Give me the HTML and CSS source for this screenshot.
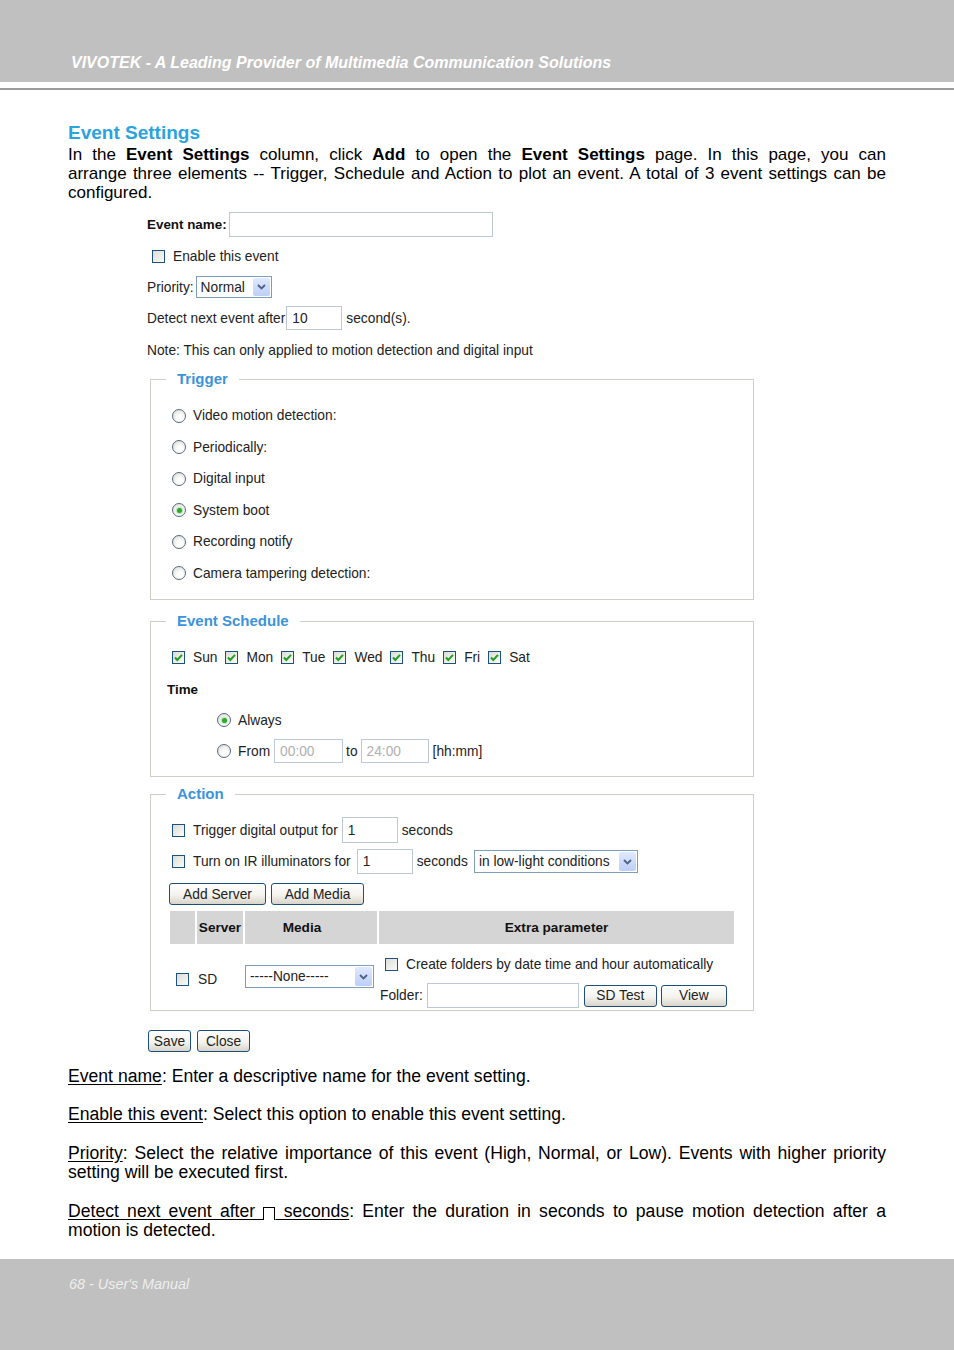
FILE: index.html
```html
<!DOCTYPE html>
<html>
<head>
<meta charset="utf-8">
<link rel="stylesheet" href="styles.css">
</head>
<body>
<div class="band"><span class="band-title">VIVOTEK - A Leading Provider of Multimedia Communication Solutions</span></div>
<div class="rule"></div>
<main class="content">
  <h1 class="title">Event Settings</h1>
  <p class="intro"><span class="jl">In the <b>Event Settings</b> column, click <b>Add</b> to open the <b>Event Settings</b> page. In this page, you can</span><span class="jl">arrange three elements -- Trigger, Schedule and Action to plot an event. A total of 3 event settings can be</span>configured.</p>

  <div class="ui">
    <div class="frow r-name"><span class="lbl-b">Event name:</span><span class="inp w-name"></span></div>
    <div class="frow r-enable"><span class="cb"></span><span class="gap8">Enable this event</span></div>
    <div class="frow r-prio"><span>Priority:</span>
      <span class="sel w-prio"><span class="sel-text">Normal</span><span class="sel-btn"><svg width="9" height="6" viewBox="0 0 9 6"><path d="M1 1 L4.5 4.5 L8 1" fill="none" stroke="#4d6185" stroke-width="1.8"/></svg></span></span>
    </div>
    <div class="frow r-detect"><span>Detect next event after</span><span class="inp w-sec">10</span><span class="gap4">second(s).</span></div>
    <div class="frow r-note">Note: This can only applied to motion detection and digital input</div>

    <fieldset class="fs fs-trigger">
      <legend class="lg">Trigger</legend>
      <div class="fs-in in-trigger">
        <div class="trow"><span class="rd"></span><span class="gap7">Video motion detection:</span></div>
        <div class="trow"><span class="rd"></span><span class="gap7">Periodically:</span></div>
        <div class="trow"><span class="rd"></span><span class="gap7">Digital input</span></div>
        <div class="trow"><span class="rd on"></span><span class="gap7">System boot</span></div>
        <div class="trow"><span class="rd"></span><span class="gap7">Recording notify</span></div>
        <div class="trow"><span class="rd"></span><span class="gap7">Camera tampering detection:</span></div>
      </div>
    </fieldset>

    <fieldset class="fs fs-sched">
      <legend class="lg">Event Schedule</legend>
      <div class="fs-in in-sched">
        <div class="srow days">
          <span class="cb on"><svg width="11" height="11" viewBox="0 0 11 11"><path d="M2 5.5 L4.3 8 L9 2.8" fill="none" stroke="#21a121" stroke-width="2"/></svg></span><span class="day">Sun</span>
          <span class="cb on"><svg width="11" height="11" viewBox="0 0 11 11"><path d="M2 5.5 L4.3 8 L9 2.8" fill="none" stroke="#21a121" stroke-width="2"/></svg></span><span class="day">Mon</span>
          <span class="cb on"><svg width="11" height="11" viewBox="0 0 11 11"><path d="M2 5.5 L4.3 8 L9 2.8" fill="none" stroke="#21a121" stroke-width="2"/></svg></span><span class="day">Tue</span>
          <span class="cb on"><svg width="11" height="11" viewBox="0 0 11 11"><path d="M2 5.5 L4.3 8 L9 2.8" fill="none" stroke="#21a121" stroke-width="2"/></svg></span><span class="day">Wed</span>
          <span class="cb on"><svg width="11" height="11" viewBox="0 0 11 11"><path d="M2 5.5 L4.3 8 L9 2.8" fill="none" stroke="#21a121" stroke-width="2"/></svg></span><span class="day">Thu</span>
          <span class="cb on"><svg width="11" height="11" viewBox="0 0 11 11"><path d="M2 5.5 L4.3 8 L9 2.8" fill="none" stroke="#21a121" stroke-width="2"/></svg></span><span class="day">Fri</span>
          <span class="cb on"><svg width="11" height="11" viewBox="0 0 11 11"><path d="M2 5.5 L4.3 8 L9 2.8" fill="none" stroke="#21a121" stroke-width="2"/></svg></span><span class="day">Sat</span>
        </div>
        <div class="srow time"><span class="lbl-b">Time</span></div>
        <div class="srow indent"><span class="rd on"></span><span class="gap7">Always</span></div>
        <div class="srow indent"><span class="rd"></span><span class="gap7">From</span><span class="inp dis w-from">00:00</span><span class="gap3">to</span><span class="inp dis w-to">24:00</span><span class="gap4">[hh:mm]</span></div>
      </div>
    </fieldset>

    <fieldset class="fs fs-action">
      <legend class="lg">Action</legend>
      <div class="fs-in in-action">
        <div class="arow a1"><span class="cb"></span><span class="gap8">Trigger digital output for</span><span class="inp w-do">1</span><span class="gap4">seconds</span></div>
        <div class="arow a2"><span class="cb"></span><span class="gap8">Turn on IR illuminators for</span><span class="inp w-ir">1</span><span class="gap4">seconds</span>
          <span class="sel w-cond"><span class="sel-text">in low-light conditions</span><span class="sel-btn"><svg width="9" height="6" viewBox="0 0 9 6"><path d="M1 1 L4.5 4.5 L8 1" fill="none" stroke="#4d6185" stroke-width="1.8"/></svg></span></span>
        </div>
        <div class="arow btns"><span class="btn w-addsrv">Add Server</span><span class="btn w-addmed">Add Media</span></div>
        <div class="tbl">
          <div class="th"></div>
          <div class="th">Server</div>
          <div class="th th-media">Media</div>
          <div class="th">Extra parameter</div>
          <div class="td td-cb"><span class="cb"></span></div>
          <div class="td td-sd">SD</div>
          <div class="td td-sel"><span class="sel w-none"><span class="sel-text">-----None-----</span><span class="sel-btn"><svg width="9" height="6" viewBox="0 0 9 6"><path d="M1 1 L4.5 4.5 L8 1" fill="none" stroke="#4d6185" stroke-width="1.8"/></svg></span></span></div>
          <div class="td td-extra">
            <div class="xrow x1"><span class="cb"></span><span class="gap8">Create folders by date time and hour automatically</span></div>
            <div class="xrow x2"><span>Folder:</span><span class="inp w-folder"></span><span class="btn w-sdtest">SD Test</span><span class="btn w-view">View</span></div>
          </div>
        </div>
      </div>
    </fieldset>

    <div class="savebar"><span class="btn w-save">Save</span><span class="btn w-close">Close</span></div>
  </div>

  <div class="desc">
    <p><u>Event name</u>: Enter a descriptive name for the event setting.</p>
    <p><u>Enable this event</u>: Select this option to enable this event setting.</p>
    <p><u>Priority</u>: Select the relative importance of this event (High, Normal, or Low). Events with higher priority setting will be executed first.</p>
    <p><span class="jl"><u>Detect next event after <span class="box"></span> seconds</u>: Enter the duration in seconds to pause motion detection after a</span>motion is detected.</p>
  </div>
</main>
<footer class="foot">68 - User's Manual</footer>
</body>
</html>
```

FILE: styles.css
```css
* { box-sizing: border-box; }
html, body { margin: 0; padding: 0; }
body {
  width: 954px;
  min-height: 1350px;
  display: flex;
  flex-direction: column;
  font-family: "Liberation Sans", Arial, sans-serif;
  color: #000;
  background: #fff;
}

/* header */
.band {
  height: 82px;
  background: #bfc0bf;
  display: flex;
  align-items: flex-end;
  padding: 0 0 10px 71px;
}
.band-title {
  color: #fff;
  font-weight: bold;
  font-style: italic;
  font-size: 16px;
  line-height: 18px;
}
.rule { height: 2px; background: #9b9b9b; margin-top: 6px; }

.content { padding: 0 68px; flex: 1; }
.title {
  margin: 31px 0 0;
  font-size: 19px;
  line-height: 24px;
  color: #2aa3de;
  font-weight: bold;
}
.intro {
  margin: 0;
  font-size: 17px;
  line-height: 19px;
  text-align: justify;
}
.jl {
  display: block;
  text-align: justify;
  text-align-last: justify;
}

/* UI form */
.ui {
  margin: 9px 0 0 79px;
  width: 607px;
  font-size: 13.75px;
  color: #222;
}
.frow { display: flex; align-items: center; white-space: nowrap; }
.r-name { height: 26px; }
.r-enable { height: 20px; margin-top: 9px; padding-left: 5px; }
.r-prio { height: 22px; margin-top: 10px; }
.r-detect { height: 24px; margin-top: 8px; }
.r-note { height: 20px; margin-top: 10px; }

.lbl-b { font-weight: bold; font-size: 13.4px; color: #111; }
.gap8 { margin-left: 8px; }
.gap7 { margin-left: 7px; }
.gap4 { margin-left: 4px; }
.gap3 { margin-left: 3px; }

.inp {
  display: inline-flex;
  align-items: center;
  border: 1px solid #bcc7d8;
  background: #fff;
  padding-left: 5px;
  color: #222;
  flex: none;
}
.inp.dis { color: #b0b0b0; }
.w-name { width: 264px; height: 25px; margin-left: 2px; }
.w-sec { width: 56px; height: 24px; margin-left: 1px; }
.w-from { width: 69px; height: 24px; margin-left: 4px; }
.w-to { width: 68px; height: 24px; margin-left: 3px; }
.w-do { width: 56px; height: 26px; margin-left: 4px; }
.w-ir { width: 56px; height: 25px; margin-left: 6px; }
.w-folder { width: 152px; height: 25px; margin-left: 4px; }

.sel {
  display: inline-flex;
  border: 1px solid #7f9db9;
  background: #fff;
  flex: none;
}
.sel-text { flex: 1; padding-left: 4px; display: flex; align-items: center; color: #222; white-space: nowrap; overflow: hidden; }
.sel-btn {
  width: 17px;
  margin: 1px;
  background: linear-gradient(#e0e9fd, #bccff8);
  border-radius: 2px;
  display: flex;
  align-items: center;
  justify-content: center;
  flex: none;
}
.w-prio { width: 76px; height: 22px; margin-left: 2px; }
.w-cond { width: 164px; height: 23px; margin-left: 6px; }
.w-none { width: 129px; height: 23px; }

/* checkbox & radio */
.cb {
  width: 13px;
  height: 13px;
  border: 1px solid #1c5180;
  background: linear-gradient(135deg, #dcdcd7, #fbfbf9);
  display: inline-flex;
  align-items: center;
  justify-content: center;
  flex: none;
}
.rd {
  width: 14px;
  height: 14px;
  border-radius: 50%;
  border: 1px solid #566b80;
  background: radial-gradient(circle at 60% 65%, #ffffff 25%, #d4d4cd 100%);
  display: inline-flex;
  align-items: center;
  justify-content: center;
  flex: none;
}
.rd.on::after {
  content: "";
  width: 5px;
  height: 5px;
  border-radius: 50%;
  background: #2fa82f;
  box-shadow: 0 0 1px 1px #b8e6b0;
}

/* fieldsets */
.fs {
  margin: 10px 0 0 3px;
  width: 604px;
  border: 1px solid #cfcfc7;
  padding: 0;
  min-width: 0;
}
.lg {
  margin-left: 15px;
  padding: 0 11px;
  font-size: 15px;
  font-weight: bold;
  line-height: 18px;
  color: #3b94d9;
}
.fs-sched { margin-top: 12px; }
.fs-action { margin-top: 8px; }

.in-trigger { padding: 12px 0 10px 21px; }
.trow { height: 31.5px; display: flex; align-items: center; }

.in-sched { padding: 15px 0 13px 21px; }
.srow { height: 24px; display: flex; align-items: center; white-space: nowrap; }
.srow + .srow { margin-top: 7px; }
.srow.time { margin-top: 8px; margin-left: -5px; }
.srow.indent { padding-left: 45px; }
.day { margin-left: 8px; margin-right: 8px; }

.in-action { padding: 14px 0 2px 21px; }
.arow { display: flex; align-items: center; white-space: nowrap; }
.a1 { height: 26px; }
.a2 { height: 25px; margin-top: 6px; }
.btns { height: 22px; margin-top: 9px; margin-left: -3px; gap: 5px; }

.btn {
  display: inline-flex;
  align-items: center;
  justify-content: center;
  height: 22px;
  border: 1px solid #1d4f7e;
  border-radius: 3px;
  background: linear-gradient(#ffffff, #f4f3ee 55%, #d9d4ca);
  color: #222;
  font-size: 13.75px;
  flex: none;
}
.w-addsrv { width: 97px; }
.w-addmed { width: 93px; }
.w-sdtest { width: 73px; margin-left: 5px; }
.w-view { width: 66px; margin-left: 4px; }
.w-save { width: 43px; }
.w-close { width: 53px; }

.tbl {
  margin: 6px 0 0 -2px;
  display: grid;
  grid-template-columns: 25px 46px 132px 355px;
  column-gap: 2px;
}
.th {
  height: 33px;
  background: #d5d5d5;
  font-weight: bold;
  font-size: 13.6px;
  color: #111;
  display: flex;
  align-items: center;
  justify-content: center;
  white-space: nowrap;
}
.th-media { padding-right: 18px; }
.td { display: flex; align-items: center; }
.td-cb { padding-left: 6px; padding-top: 6px; }
.td-sd { padding-left: 1px; padding-top: 6px; }
.td-sel { padding-top: 1px; }
.td-extra { flex-direction: column; align-items: flex-start; padding-top: 10px; }
.xrow { display: flex; align-items: center; white-space: nowrap; }
.x1 { height: 21px; padding-left: 6px; }
.x2 { height: 25px; margin-top: 8px; padding-left: 1px; }

.savebar { display: flex; gap: 6px; margin: 19px 0 0 1px; }

/* description */
.desc { margin-top: 15px; font-size: 17.6px; line-height: 19.4px; }
.desc p { margin: 0 0 19px; text-align: justify; }
.desc u { text-underline-offset: 2px; }
.box {
  display: inline-block;
  width: 12px;
  height: 13px;
  border: 1.5px solid #000;
  border-bottom: none;
  vertical-align: -3px;
}

.foot {
  height: 92px;
  background: #bfc0bf;
  padding: 17px 0 0 69px;
  color: #eeeeee;
  font-style: italic;
  font-size: 14.4px;
  line-height: 17px;
}
```
